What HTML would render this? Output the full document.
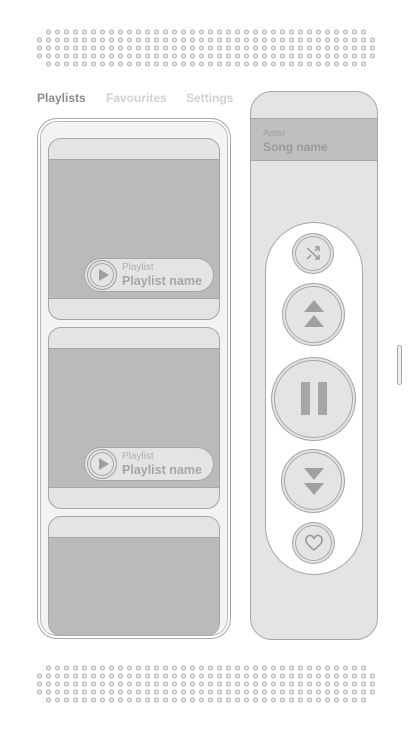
<!DOCTYPE html>
<html><head><meta charset="utf-8"><style>
*{margin:0;padding:0;box-sizing:border-box}
body{width:411px;height:731px;background:#fff;position:relative;overflow:hidden;font-family:"Liberation Sans",Arial,sans-serif}
.a{position:absolute}
.tab{position:absolute;top:91px;font-size:12px;font-weight:bold;color:#d0d0d0}
.lp{left:37px;top:118px;width:194px;height:521px;border:1.5px solid #a8a8a8;border-radius:20px;background:#f3f3f3;box-shadow:inset 0 0 0 2px #fff,inset 0 0 0 3px #bbb;overflow:hidden}
.card{position:absolute;left:10px;width:172px;height:182px;background:#e4e4e4;border:1px solid #a6a6a6;border-radius:13px;overflow:hidden}
.card .img{position:absolute;left:0;right:0;top:20px;height:140px;background:#bababa;border-top:1px solid #a6a6a6;border-bottom:1px solid #a6a6a6}
.pill{position:absolute;left:35px;top:119px;width:130px;height:34px;border-radius:17px;background:#e4e4e4;border:1px solid #a6a6a6}
.pc{position:absolute;left:2px;top:1px;width:30px;height:30px;border-radius:50%;border:1px solid #a0a0a0;box-shadow:inset 0 0 0 2px #e4e4e4,inset 0 0 0 3px #a8a8a8}
.pc:after{content:"";position:absolute;left:11px;top:8px;border-left:10px solid #a0a0a0;border-top:6px solid transparent;border-bottom:6px solid transparent}
.pt1{position:absolute;left:37px;top:3px;font-size:10px;color:#b0b0b0}
.pt2{position:absolute;left:37px;top:15px;font-size:12.5px;font-weight:bold;color:#a6a6a6}
.rp{left:250px;top:91px;width:128px;height:549px;border:1px solid #a6a6a6;border-radius:22px;background:#e4e4e4;overflow:hidden}
.band{position:absolute;left:0;right:0;top:26px;height:43px;background:#bfbfbf;border-top:1px solid #a6a6a6;border-bottom:1px solid #a6a6a6}
.ctl{left:265px;top:222px;width:98px;height:353px;border:1px solid #a6a6a6;border-radius:49px;background:#fff}
.btn{position:absolute;border-radius:50%;background:#e4e4e4;border:1px solid #a6a6a6;box-shadow:inset 0 0 0 2px #e4e4e4,inset 0 0 0 3px #a8a8a8}
</style></head><body>
<svg class="a" style="left:0;top:0" width="411" height="731">
<defs>
<pattern id="d" x="0" y="0" width="9" height="8" patternUnits="userSpaceOnUse"><circle cx="4.5" cy="4" r="2" fill="#ececec" stroke="#ababab" stroke-width="1"/></pattern>
</defs>
<g transform="translate(44,28)"><rect width="324" height="8" fill="url(#d)"/></g>
<g transform="translate(35,36)"><rect width="342" height="24" fill="url(#d)"/></g>
<g transform="translate(44,60)"><rect width="324" height="8" fill="url(#d)"/></g>
<g transform="translate(44,664)"><rect width="324" height="8" fill="url(#d)"/></g>
<g transform="translate(35,672)"><rect width="342" height="24" fill="url(#d)"/></g>
<g transform="translate(44,696)"><rect width="324" height="8" fill="url(#d)"/></g>
</svg>
<div class="tab" style="left:37px;color:#8a8a8a">Playlists</div>
<div class="tab" style="left:106px">Favourites</div>
<div class="tab" style="left:186px">Settings</div>
<div class="a lp">
 <div class="card" style="top:19px"><div class="img"></div><div class="pill"><div class="pc"></div><div class="pt1">Playlist</div><div class="pt2">Playlist name</div></div></div>
 <div class="card" style="top:208px"><div class="img"></div><div class="pill"><div class="pc"></div><div class="pt1">Playlist</div><div class="pt2">Playlist name</div></div></div>
 <div class="card" style="top:397px;height:120px"><div class="img" style="height:110px;border-bottom:none"></div></div>
</div>
<div class="a rp"><div class="band"><div class="a" style="left:12px;top:9px;font-size:9.5px;color:#9e9e9e">Artist</div><div class="a" style="left:12px;top:21px;font-size:12px;font-weight:bold;color:#9a9a9a">Song name</div></div></div>
<div class="a ctl"></div>
<div class="btn" style="left:292px;top:233px;width:42px;height:41px"></div>
<svg class="a" style="left:303px;top:243px" width="20" height="20" fill="none" stroke="#999" stroke-width="1.5"><path d="M4 5l12 11M4 16l4-4M12 8l4-4M16 12v4h-4M12 4h4v4"/></svg>
<div class="btn" style="left:282px;top:283px;width:63px;height:63px"></div>
<svg class="a" style="left:303px;top:298px" width="22" height="32"><path d="M11 2L21 14H1zM11 17L21 29H1z" fill="#a0a0a0"/></svg>
<div class="btn" style="left:271px;top:357px;width:85px;height:84px"></div>
<div class="a" style="left:301px;top:382px;width:9px;height:33px;background:#a6a6a6"></div>
<div class="a" style="left:318px;top:382px;width:9px;height:33px;background:#a6a6a6"></div>
<div class="btn" style="left:281px;top:449px;width:64px;height:64px"></div>
<svg class="a" style="left:303px;top:466px" width="22" height="32"><path d="M1 2H21L11 14zM1 17H21L11 29z" fill="#a0a0a0"/></svg>
<div class="btn" style="left:292px;top:522px;width:43px;height:42px"></div>
<svg class="a" style="left:304px;top:533px" width="20" height="20"><path d="M10 17C4 12 2 10 2 7a4 4 0 0 1 8-1a4 4 0 0 1 8 1c0 3-2 5-8 10z" fill="none" stroke="#999" stroke-width="1.6"/></svg>
<div class="a" style="left:397px;top:345px;width:5px;height:40px;border:1px solid #a6a6a6;border-radius:3px;background:#f0f0f0"></div>
</body></html>
